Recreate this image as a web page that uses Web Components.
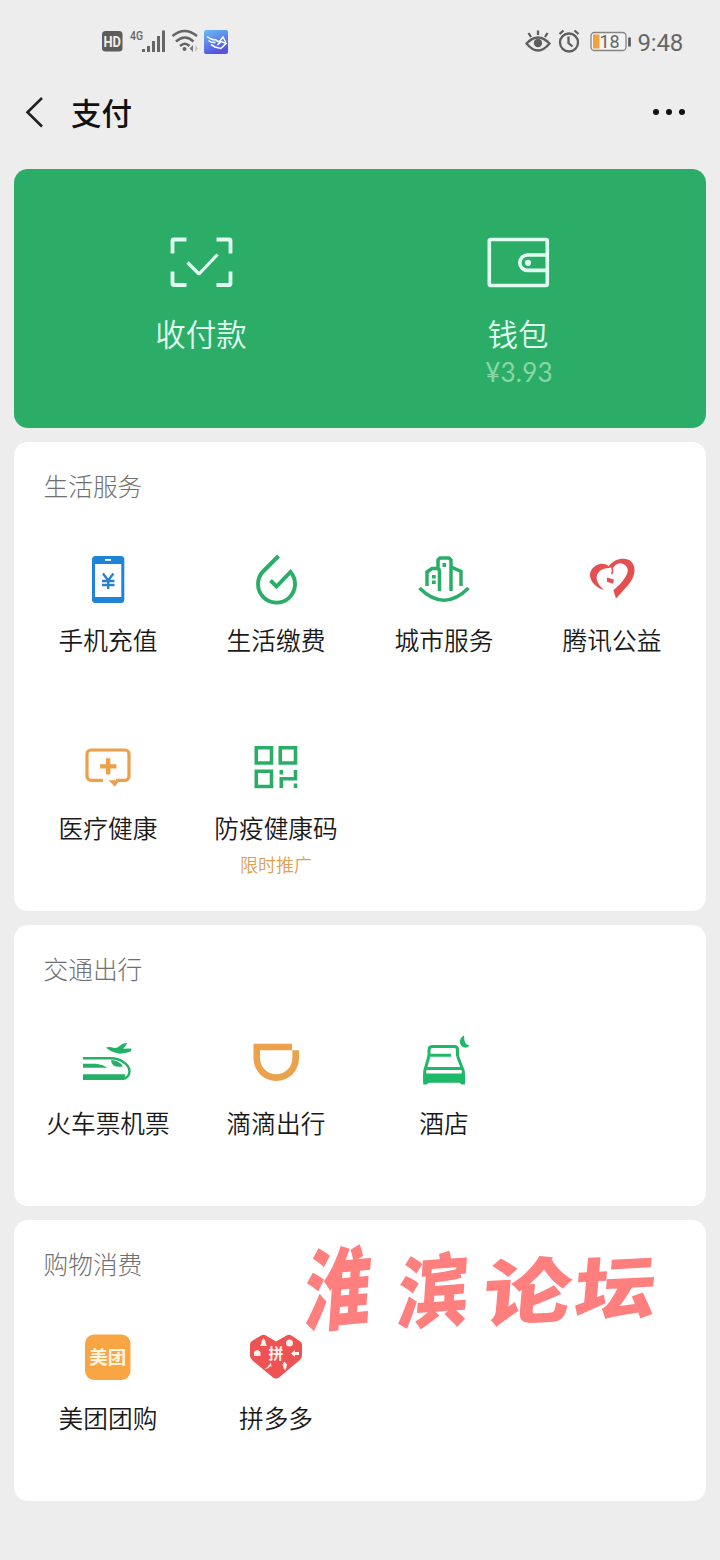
<!DOCTYPE html>
<html lang="zh-CN">
<head>
<meta charset="utf-8">
<title>支付</title>
<style>
html,body{margin:0;padding:0;background:#ededed}
body{font-family:"Noto Sans CJK SC",sans-serif;color:#1a1a1a}
</style>
</head>
<body>
<pay-page></pay-page>
<script>
const define = (name, html) => {
  const t = document.createElement('template');
  t.innerHTML = html;
  customElements.define(name, class extends HTMLElement {
    constructor() {
      super();
      this.attachShadow({mode: 'open'}).append(t.content.cloneNode(true));
    }
  });
};

const icons = {
  scan: ['0 0 64 52', `<g fill="none" stroke="#e0fff0" stroke-width="3.8"><path d="M17.500 3.500H5A1.500 1.500 0 0 0 3.500 5V17.500M47.500 3.500H60A1.500 1.500 0 0 1 61.500 5V17.500M3.500 35.500v12A1.500 1.500 0 0 0 5 49h12.500M61.500 35.500v12A1.500 1.500 0 0 1 60 49H47.500"/><path d="M18.500 26.500 29 37q1 1 2 0L48.500 18.500" stroke-width="3.200"/></g>`],
  wallet: ['0 0 64 52', `<g fill="none" stroke="#e0fff0" stroke-width="3.600"><rect x="2.300" y="3.500" width="58" height="46" rx="1.500"/><path d="M60 19H40.500a7.700 7.700 0 0 0 0 15.400H60"/></g><circle cx="41" cy="26.800" r="3.100" fill="#e0fff0"/>`],
  phone: ['0 0 60 60', `<rect x="14" y="6" width="32.300" height="47" rx="3.500" fill="#1f83d8"/><path d="M17 14h26.300v33H17z" fill="#fff"/><path d="M27 9.900h6" stroke="#fff" stroke-width="1.800"/><g fill="none" stroke="#2a7fc9" stroke-width="2.300"><path d="m25 23.500 5.200 7 5.200-7M30.200 30v9M24 31h12.500M24 35h12.500"/></g>`],
  drop: ['0 0 60 60', `<path d="M32.500 6 17.500 21A18.500 18.500 0 1 0 44.500 22L30.500 36.500 24.500 30.500" fill="none" stroke="#2aae67" stroke-width="3.900"/>`],
  city: ['0 0 60 60', `<g fill="none" stroke="#2aae67" stroke-width="3.500"><path d="M5.500 38q24.500 24.500 49 0"/><path d="M13 36V22l5-3.500h4.500q3 0 3 3V41M24 19V10l2-2h9l2 2v31M37 17l10 4.500V36"/></g><path d="M28.500 13h3.500v4h-3.500zM18 25h3.700v3.500H18zM18 30.500h3.700V34H18z" fill="#2aae67"/>`],
  heart: ['0 0 60 60', `<path d="M28.500 18C25 13.500 19 12.500 14 15.500 9 18.500 7 23 8.500 28c2 6 7 10 13.500 12C17.500 36 14 31 14.700 26.500 15.500 21 22 17.500 28.500 18z" fill="#e45050"/><path d="M26.500 16.500C31 10.500 37 8.300 43.500 9c6 .8 9.500 6 9 12-.6 9-8 16-13 21.500L34 48.500 31.300 40C37 36 42.500 29.500 45 24c2-5 0-9-5.300-10.500-3.500-1-7 1.500-9 5z" fill="#e45050"/><path d="M30 18q1.500 3.500-.5 6" fill="none" stroke="#e45050" stroke-width="1.500"/><path d="m25 27.500 7 2-1 4.200-6-2z" fill="#e45050"/>`],
  medical: ['0 0 60 60', `<path d="M25 42.800H13a4 4 0 0 1-4-4V16.500a4 4 0 0 1 4-4h34a4 4 0 0 1 4 4v22.300a4 4 0 0 1-4 4H38" transform="translate(0 -.5)" fill="none" stroke="#eca04b" stroke-width="3.200"/><path d="M30.500 42.300h11l-4.500 6.500zM28 20.200h4.400v6h6v4.400h-6v6H28v-6h-6v-4.400h6z" fill="#eca04b"/>`],
  code: ['0 0 60 60', `<g fill="none" stroke="#2aae67" stroke-width="3.600"><path d="M10.300 9.800h15.200v15.200H10.300zM34.300 9.800h15.200v15.200H34.300zM10.300 33.300h15.200v15.200H10.300zM35.300 50V40.800H49.500V32M35.300 32v4.500M49.500 45.500V50"/></g>`],
  travel: ['0 0 60 60', `<g transform="translate(0 5)"><path d="M5 20.300h28c9 0 18.500 6 18.500 13 0 4-3 7.500-7.500 7.500" fill="none" stroke="#23b167" stroke-width="2.400"/><path d="M5 36.200h42.500L46 42H5zM5 25.700h13q8 1 11 4H5zM33 22q8 0 12 6.500-7 1-9.500-1T33 22zM28 9.500q4-1 8 .5l3-.3 6-4.200 4.500-.5-4.200 5.800 8-.4v2.700q-4 2.200-11.500 2.600Q33 14.500 28 9.500z" fill="#23b167"/></g>`],
  didi: ['0 0 60 60', `<path d="M7.500 10.800H46V17.300H53V25.500a22.750 22.500 0 0 1-45.500 0zM14 17.300V25a16.200 16.300 0 0 0 32.400 0V17.300z" fill="#eca14b" fill-rule="evenodd"/>`],
  hotel: ['0 0 60 60', `<g transform="translate(0 5)"><g fill="none" stroke="#1db868" stroke-width="3"><path d="M15 18V12q0-3.500 3.500-3.500h22q3 0 3 3.500v6"/><path d="M16 17.300h21M15 18 10.700 33v11M43.500 18 49.300 33v11M12 30.500h36"/></g><path d="M9.200 35.500H51V46.500h-3.500l-1.800-1.800h-31L13 46.500H9.200zM50-2.500c-5.500 2.500-6 11 1.500 12.200Q54.500 9.500 55.500 7.300 50 7.500 50-2.500z" fill="#1db868"/></g>`],
  meituan: ['0 0 60 60', `<rect x="7" y="6.500" width="45.500" height="45.500" rx="9" fill="#faa544"/><text x="29.800" y="35.800" text-anchor="middle" font-family="Noto Sans CJK SC" font-weight="700" font-size="18.500" fill="#fff4dc">美团</text>`],
  pdd: ['0 0 60 60', `<path d="M15.500 7.200q2-1 4 0L30 13.500 41 7.200q2-1 4 0l9 6q2 1.200 2 3.300v11q0 3-2.500 4.700L33 49.500q-3 2-6 0L6.500 32.500Q4 30.500 4 27.500v-11q0-2.300 2-3.500z" fill="#ee5252"/><text x="30" y="31.300" text-anchor="middle" font-family="Noto Sans CJK SC" font-weight="700" font-size="15" fill="#fff0ed">拼</text><g fill="#fff0ed"><path d="m17.500 10 2 3v2l1.500 3h-7l1.500-3v-2zM8 24q3-4 6.500 0v4H8zM49 22l-4 3.500 4 3.500v-2h4v-3h-4zM18 40.500l3-1 4-5 .5 5-1-1.500-3 2.500zM38.500 33.500l2.500 3-1 5h-2l-1.500-5z"/><circle cx="43.500" cy="15" r="3.500"/></g>`]
};

customElements.define('pay-icon', class extends HTMLElement {
  connectedCallback() {
    const [box, art] = icons[this.getAttribute('name')];
    const root = this.shadowRoot || this.attachShadow({mode: 'open'});
    root.innerHTML = `<style>:host{display:block}svg{display:block;overflow:visible;width:100%;height:100%}</style><svg viewBox="${box}">${art}</svg>`;
  }
});

define('status-bar', `<style>
:host{display:flex;height:84px;box-sizing:border-box;justify-content:space-between;padding:0 37px 0 101px;font-family:Roboto,sans-serif;color:#666}
div{display:flex;height:84px;align-items:center}
svg{display:block;overflow:visible}
.time{font-size:24px;line-height:28px;margin-left:7px;padding-top:2px;letter-spacing:-.2px}
</style>
<div><svg width="130" height="30" viewBox="0 0 130 30">
<rect x="1" y="4" width="20.500" height="20.500" rx="3.500" fill="#5c5c5c"/><text x="11.200" y="19.800" text-anchor="middle" font-size="14.500" font-weight="700" textLength="17.500" lengthAdjust="spacingAndGlyphs" fill="#eee">HD</text>
<text x="29" y="12.500" font-size="12.500" font-weight="500" fill="#666" textLength="13" lengthAdjust="spacingAndGlyphs">4G</text>
<path d="M42.500 22v3M47.500 19v6M52.500 14v11M57.500 9v16M62.500 3.500V25" stroke="#666" stroke-width="3"/>
<g fill="none" stroke="#666" stroke-width="2.500"><path d="M71.500 9q12-10 24.500 0M75 14.500q9-8 17.500 0M79 19q5-4.500 9.500 0"/></g><circle cx="83.500" cy="22" r="2" fill="#666"/><path d="m92 18-3.500 3.500L92 25z" fill="#777"/><path d="m94 18 3 3.500-3 3.500z" fill="#c7c7c7"/>
<defs><linearGradient id="app" x1="0" y1="0" x2=".4" y2="1"><stop stop-color="#67bdf5"/><stop offset="1" stop-color="#5553e2"/></linearGradient></defs>
<rect x="103" y="3" width="24" height="24" rx="2" fill="url(#app)"/><path d="M106 9.500q4 3.500 8 3.500M107.500 13.500q3 2.500 7 2M110 17.500l4 2.500 6 1.500 5-5-5-2-3.500 3.500M114 12.500l4 2.500 4-5 3 5.500" fill="none" stroke="#fff" stroke-width="1.500"/>
</svg></div>
<div><svg width="105" height="30" viewBox="0 0 105 30">
<g fill="none" stroke="#5e5e5e" stroke-width="2.300"><path d="M.5 16.500q11.500-12 23 0-11.500 14-23 0zM12 8V3.500M5 10 2.500 6M19 10l2.500-4"/><circle cx="43" cy="15.500" r="9"/><path d="M42.500 9.500v6.500l4 3.500M33.500 7l4-3.500M52.500 7l-4-3.500"/></g><circle cx="12" cy="16" r="4.200" fill="#5e5e5e"/>
<rect x="65" y="5.500" width="35" height="18" rx="3.500" fill="#f3f3f3" stroke="#858585" stroke-width="1.300"/><path d="M67 7.500h6.500v14H67z" fill="#eda23d"/><text x="83.500" y="20.900" text-anchor="middle" font-size="18" fill="#666">18</text><path d="M103.500 10.500v9" stroke="#555" stroke-width="2.600"/>
</svg><span class="time">9:48</span></div>`);

define('nav-bar', `<style>
:host{display:flex;height:85px;box-sizing:border-box;align-items:flex-start;padding:10px 34px 0 24px}
svg{display:block}
h1{font-size:30.5px;font-weight:500;line-height:40px;margin:-2px auto 0 26px;color:#111}
</style>
<svg width="21" height="36" viewBox="0 0 21 36"><path d="M18 4 3.500 18.200 18 32.500" fill="none" stroke="#222" stroke-width="2.600"/></svg>
<h1>支付</h1>
<svg width="34" height="36" viewBox="0 0 34 36" fill="#111"><circle cx="4" cy="18" r="3"/><circle cx="17" cy="18" r="3"/><circle cx="30" cy="18" r="3"/></svg>`);

define('pay-hero', `<style>
:host{display:grid;grid-template-columns:1fr 1fr;height:259px;box-sizing:border-box;padding:67px 28px 0;border-radius:14px;background:#2bad67;color:#e0fff0}
div{display:flex;flex-direction:column;align-items:center}
pay-icon{width:64px;height:52px}
b{font-weight:350;font-size:30.5px;line-height:40px;margin-top:25px}
small{font:400 26px/34px Lato,sans-serif;color:#89d6a8;letter-spacing:.2px;margin-top:2px}
div:last-child b{margin-left:-2px}
</style>
<div><pay-icon name="scan"></pay-icon><b>收付款</b></div>
<div><pay-icon name="wallet"></pay-icon><b>钱包</b><small>¥3.93</small></div>`);

customElements.define('service-tile', class extends HTMLElement {
  connectedCallback() {
    const root = this.shadowRoot || this.attachShadow({mode: 'open'});
    root.innerHTML = `<style>
:host{display:flex;flex-direction:column;align-items:center;height:188px}
pay-icon{width:60px;height:60px}
b{font-weight:350;font-size:24.7px;line-height:36px;margin-top:11px;white-space:nowrap}
small{font-weight:350;font-size:18px;line-height:26px;margin-top:6px;color:#dfa04e}
</style><pay-icon name="${this.getAttribute('icon')}"></pay-icon><b><slot></slot></b><small><slot name="note"></slot></small>`;
  }
});

define('service-card', `<style>
:host{display:block;position:relative;background:#fff;border-radius:14px;height:281px;box-sizing:border-box;padding:25px 10px 0}
:host([tall]){height:469px}
h2{margin:0 0 47px 19.500px;font-size:24.7px;font-weight:300;line-height:36px;color:#707070}
.grid{display:grid;grid-template-columns:repeat(4,168px)}
</style><h2><slot name="title"></slot></h2><div class="grid"><slot></slot></div><slot name="overlay"></slot>`);

define('forum-mark', `<style>
:host{position:absolute;left:291px;top:10px;display:flex;font-size:78px;line-height:112px;font-weight:900;color:#ff7f7f}
span{display:block;width:91px;transform-origin:39px 56px}
span:nth-of-type(1){transform:translate(-5px,-3px) skew(-4deg,-5deg) scale(.85,1.15)}
span:nth-of-type(2){transform:translate(-1px,0) skew(-4deg,-4deg) scale(.91,1.03)}
span:nth-of-type(3){transform:translate(2px,1px) skew(-5deg,-3deg) scale(1.13,.93)}
span:nth-of-type(4){transform:translate(-1px,-2px) skew(-5deg,-3deg) scale(1.04,.88)}
</style><span>淮</span><span>滨</span><span>论</span><span>坛</span>`);

define('pay-page', `<style>
:host{display:block;width:720px;height:1560px;background:#ededed;overflow:hidden}
main{display:flex;flex-direction:column;gap:14px;padding:0 14px}
</style>
<status-bar></status-bar><nav-bar></nav-bar>
<main>
<pay-hero></pay-hero>
<service-card tall><span slot="title">生活服务</span>
<service-tile icon="phone">手机充值</service-tile><service-tile icon="drop">生活缴费</service-tile><service-tile icon="city">城市服务</service-tile><service-tile icon="heart">腾讯公益</service-tile>
<service-tile icon="medical">医疗健康</service-tile><service-tile icon="code">防疫健康码<span slot="note">限时推广</span></service-tile></service-card>
<service-card><span slot="title">交通出行</span>
<service-tile icon="travel">火车票机票</service-tile><service-tile icon="didi">滴滴出行</service-tile><service-tile icon="hotel">酒店</service-tile></service-card>
<service-card><span slot="title">购物消费</span>
<service-tile icon="meituan">美团团购</service-tile><service-tile icon="pdd">拼多多</service-tile><forum-mark slot="overlay"></forum-mark></service-card>
</main>`);
</script>
</body>
</html>
